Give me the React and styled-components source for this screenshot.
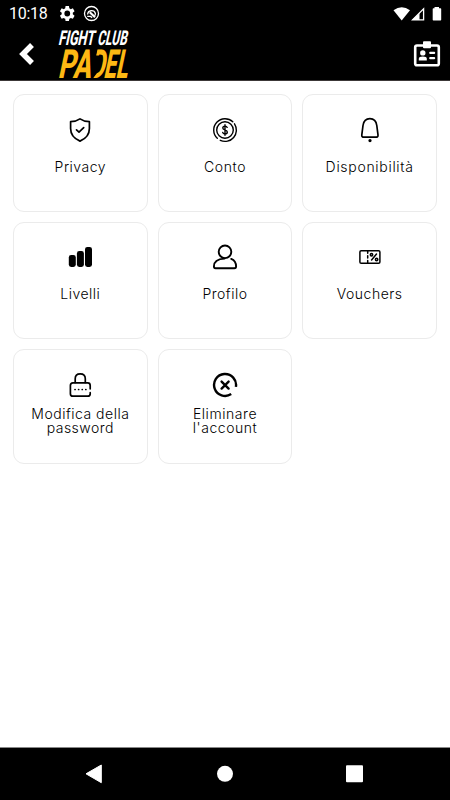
import React from 'react';
import styled, { createGlobalStyle } from 'styled-components';

const GlobalStyle = createGlobalStyle`
    * {
        box-sizing: border-box;
    }
    body {
        background-color: white;
        margin: 0;
    }
`;
const Screen = styled.div`
    color: black;
    display: flex;
    flex-direction: column;
    font-family: Inter, "Noto Sans", sans-serif;
    height: 800px;
    width: 450px;
`;
const Header = styled.header`
    background-color: black;
    border-bottom: 1px solid #3c3838;
    color: white;
    height: 81px;
`;
const StatusBar = styled.div`
    align-items: center;
    display: flex;
    font-family: Roboto, sans-serif;
    font-size: 16px;
    height: 27px;
    justify-content: space-between;
    padding: 0 7px 0 9px;
`;
const StatusGroup = styled.div`
    align-items: center;
    display: flex;
    gap: 8px;
`;
const Clock = styled.span`
    letter-spacing: -0.25px;
    margin-right: 2px;
    width: 39px;
`;
const TitleBar = styled.div`
    align-items: center;
    display: flex;
    height: 53px;
    padding: 0 9px 0 18px;
`;
const IconButton = styled.button`
    background: none;
    border: 0;
    color: inherit;
    display: flex;
    padding: 0;
`;
const Logo = styled.svg`
    display: block;
    font-family: Roboto, sans-serif;
    font-weight: 800;
    height: 53px;
    margin: 0 auto 0 20px;
    overflow: visible;
    width: 78px;
`;
const Grid = styled.main`
    align-content: start;
    display: grid;
    flex: 1;
    gap: 10px;
    grid-template-columns: repeat(3, 1fr);
    grid-template-rows: 117.5px 117.5px 114.5px;
    padding: 13px 13px 0;
`;
const Card = styled.div`
    align-items: center;
    border: 1px solid #ebebeb;
    border-radius: 11px;
    display: flex;
    flex-direction: column;
    padding-top: 21.5px;
`;
const CardIcon = styled.svg`
    display: block;
    fill: none;
    flex: none;
    height: 26px;
    stroke: black;
    stroke-linecap: round;
    stroke-linejoin: round;
    stroke-width: ${props => props.$stroke || 1.7};
    width: 26px;
`;
const Label = styled.div`
    font-size: 14px;
    font-weight: 300;
    letter-spacing: ${props => props.$spacing}px;
    line-height: 14px;
    margin-top: ${props => props.$tall ? 9.5 : 17}px;
    text-align: center;
    white-space: pre-line;
`;
const NavBar = styled.footer`
    background-color: black;
    border-top: 1px solid #888888;
    display: flex;
    height: 53px;
    justify-content: center;
`;
const NavIcon = styled.svg`
    display: block;
    fill: white;
    height: 52px;
    width: 130px;
`;

const Privacy = () => <CardIcon viewBox="0 0 26 26">
    <path d="M13 1.9Q9 4.7 3.6 4.7V11.5C3.6 18 7 21.6 13 24.1C19 21.6 22.4 18 22.4 11.5V4.7Q17 4.7 13 1.9Z" />
    <path d="M9.5 12.8L12 15.2L16.7 10.6" />
</CardIcon>;

const Money = () => <CardIcon viewBox="0 0 26 26" $stroke={1.4}>
    <circle cx="13" cy="13" r="8.3" />
    <path d="M5.3 21.3A11.3 11.3 0 0 1 20.8 4.8M22.5 6.8A11.3 11.3 0 0 1 8.3 23.3" />
    <path d="M15.2 10.4C14.8 9.4 13.9 9.1 13 9.1C11.7 9.1 10.8 9.8 10.8 10.9C10.8 13.4 15.3 12.4 15.3 15.1C15.3 16.3 14.3 17 13 17C11.8 17 10.9 16.4 10.7 15.4M13 7.8V18.3" />
</CardIcon>;

const Bell = () => <CardIcon viewBox="0 0 26 26">
    <path d="M7 20.2Q4.5 20.2 4.8 17.8L6 8.5C6.6 4.2 9.4 1.7 12.9 1.7C16.4 1.7 19.2 4.2 19.8 8.5L21 17.8Q21.3 20.2 18.8 20.2Z" />
    <circle cx="13" cy="23.6" r="0.8" fill="black" />
</CardIcon>;

const Levels = () => <CardIcon viewBox="0 0 26 26">
    <g fill="black" stroke="none">
        <rect x="1.8" y="11" width="7" height="12" rx="2.4" />
        <rect x="9.9" y="7" width="7" height="16" rx="2.4" />
        <rect x="18" y="2.9" width="7" height="20.1" rx="2.4" />
    </g>
</CardIcon>;

const Profile = () => <CardIcon viewBox="0 0 26 26" $stroke={1.9}>
    <circle cx="13" cy="7.8" r="6.3" />
    <path d="M12.5 14.6C6 14.8 1.9 17.5 1.9 22.6Q1.9 24.2 3.5 24.2H22.5Q24.1 24.2 24.1 22.6C24.1 18.8 22.3 16.1 19.2 14.9" />
</CardIcon>;

const Voucher = () => <CardIcon viewBox="0 0 26 26" $stroke={1.5}>
    <rect x="2.9" y="6.8" width="20" height="12.4" rx="1.3" />
    <path d="M10.7 7V19" strokeDasharray="2.2 2.5" />
    <path d="M19.5 10L14.6 16" />
    <circle cx="14.5" cy="10.7" r="1.2" />
    <circle cx="19.6" cy="15.5" r="1.2" />
</CardIcon>;

const Lock = () => <CardIcon viewBox="0 0 26 26">
    <path d="M23.2 16.8V13.4Q23.2 10.9 20.7 10.9H5.9Q3.4 10.9 3.4 13.4V21.7Q3.4 24.2 5.9 24.2H20.7Q23.2 24.2 23.2 21.7V20.7" />
    <path d="M8.2 10.5V6.8C8.2 3.7 10.2 1.9 13.2 1.9C16.2 1.9 18.3 3.7 18.3 6.8V10.5" />
    <path d="M8 17.5H8.1M11.6 17.5H11.7M15.2 17.5H15.3M18.8 17.5H18.9" />
</CardIcon>;

const Remove = () => <CardIcon viewBox="0 0 26 26" $stroke={2.4}>
    <path d="M23.9 14.9A11 11 0 1 0 19.2 22.1" strokeLinecap="butt" />
    <path d="M9.6 9.6L16.6 16.6M16.6 9.6L9.6 16.6" />
</CardIcon>;

const items = [
    { label: 'Privacy', Icon: Privacy, spacing: 0.5 },
    { label: 'Conto', Icon: Money, spacing: 0.6 },
    { label: 'Disponibilità', Icon: Bell, spacing: 0.7 },
    { label: 'Livelli', Icon: Levels, spacing: 0.5 },
    { label: 'Profilo', Icon: Profile, spacing: 0.5 },
    { label: 'Vouchers', Icon: Voucher, spacing: 0.5 },
    { label: 'Modifica della\npassword', Icon: Lock, tall: true, spacing: 0.5 },
    { label: 'Eliminare\nl\'account', Icon: Remove, tall: true, spacing: 0.55 }
];

export default class App extends React.Component {
    render() {
        return <Screen>
            <GlobalStyle />
            <Header>
                <StatusBar>
                    <StatusGroup>
                        <Clock>10:18</Clock>
                        <svg width="17" height="17" viewBox="2 2 20 20" fill="white">
                            <path fillRule="evenodd" d="M19.4 13a7.5 7.5 0 0 0 0-2l2.1-1.7-2-3.5L17 6.9a7.5 7.5 0 0 0-1.7-1L14.9 3.2h-4l-.4 2.7a7.5 7.5 0 0 0-1.7 1L6.3 5.8l-2 3.5L6.4 11a7.5 7.5 0 0 0 0 2l-2.1 1.7 2 3.5 2.5-1a7.5 7.5 0 0 0 1.7 1l.4 2.7h4l.4-2.7a7.5 7.5 0 0 0 1.7-1l2.5 1 2-3.5ZM12.9 15.4a3.4 3.4 0 1 1 0-6.8a3.4 3.4 0 0 1 0 6.8Z" />
                        </svg>
                        <svg width="17" height="17" viewBox="0 0 17 17" fill="none" stroke="white" strokeWidth="1.3">
                            <circle cx="8.5" cy="8.5" r="7" />
                            <path d="M4.6 9.5A4 4 0 0 1 12.4 8.5Q12.4 10 11.5 11" />
                            <path d="M6.8 7.2L12 12.3" strokeWidth="2.2" />
                            <path d="M4.2 11.4H7.5L9.2 12.6" />
                        </svg>
                    </StatusGroup>
                    <svg width="50" height="16" viewBox="0 0 50 16" fill="white">
                        <path d="M0.5 4.3Q8.7 -1.7 17 4.3L8.7 14.5Z" />
                        <path d="M30.6 2.8V13.8H19.6Z" fill="none" stroke="white" strokeWidth="1.3" />
                        <path d="M26.5 7V14H19Z" />
                        <path d="M41.5 2.3V1H46V2.3H47.5Q48.2 2.3 48.2 3V13.7Q48.2 14.5 47.5 14.5H40.4Q39.7 14.5 39.7 13.7V3Q39.7 2.3 40.4 2.3Z" />
                    </svg>
                </StatusBar>
                <TitleBar>
                    <IconButton aria-label="Indietro">
                        <svg width="18" height="24" viewBox="0 0 18 24" fill="none" stroke="white" strokeWidth="5.5">
                            <path d="M14 3L5 12L14 21" />
                        </svg>
                    </IconButton>
                    <Logo viewBox="56 27 78 53">
                        <defs>
                            {/* leaves the D without its stem */}
                            <clipPath id="openD">
                                <path d="M2.5 -32H20V3H3L9 -8V-22H2.5Z" />
                            </clipPath>
                        </defs>
                        <g fill="white" fontSize="20.5">
                            <text transform="translate(58 45) skewX(-12)" textLength="36" lengthAdjust="spacingAndGlyphs">FIGHT</text>
                            <text transform="translate(97 45) skewX(-12)" textLength="29.5" lengthAdjust="spacingAndGlyphs">CLUB</text>
                        </g>
                        <g fill="#fdb813" fontSize="40">
                            <text transform="translate(57.5 77.5) skewX(-12)" textLength="33" lengthAdjust="spacingAndGlyphs">PA</text>
                            <g transform="translate(89 77.5) skewX(-12)">
                                <text clipPath="url(#openD)" textLength="15" lengthAdjust="spacingAndGlyphs">D</text>
                            </g>
                            <text transform="translate(103 77.5) skewX(-12)" textLength="24" lengthAdjust="spacingAndGlyphs">EL</text>
                        </g>
                    </Logo>
                    <IconButton aria-label="Tessera">
                        <svg width="28" height="28" viewBox="0 0 28 28" fill="white">
                            <rect x="2.2" y="5.5" width="23.6" height="19.7" rx="1.8" fill="none" stroke="white" strokeWidth="2.6" />
                            <rect x="10" y="1.2" width="8" height="7" rx="1" />
                            <circle cx="9.8" cy="12.9" r="2.7" />
                            <path d="M5.8 20.4V18.7Q5.8 16.4 9.8 16.4Q13.8 16.4 13.8 18.7V20.4Z" />
                            <rect x="16.2" y="11.8" width="6" height="2.3" rx="1" />
                            <rect x="16.2" y="16.9" width="6" height="2.3" rx="1" />
                        </svg>
                    </IconButton>
                </TitleBar>
            </Header>
            <Grid>
                {items.map(({ label, Icon, tall, spacing }) => <Card key={label}>
                    <Icon />
                    <Label $tall={tall} $spacing={spacing}>{label}</Label>
                </Card>)}
            </Grid>
            <NavBar>
                <NavIcon viewBox="0 0 130 52">
                    <path d="M56 25.8L71.3 17V34.7Z" stroke="white" strokeLinejoin="round" />
                </NavIcon>
                <NavIcon viewBox="0 0 130 52">
                    <circle cx="65" cy="25.8" r="8" />
                </NavIcon>
                <NavIcon viewBox="0 0 130 52">
                    <rect x="56" y="17.2" width="17" height="17" rx="1" />
                </NavIcon>
            </NavBar>
        </Screen>;
    }
}
